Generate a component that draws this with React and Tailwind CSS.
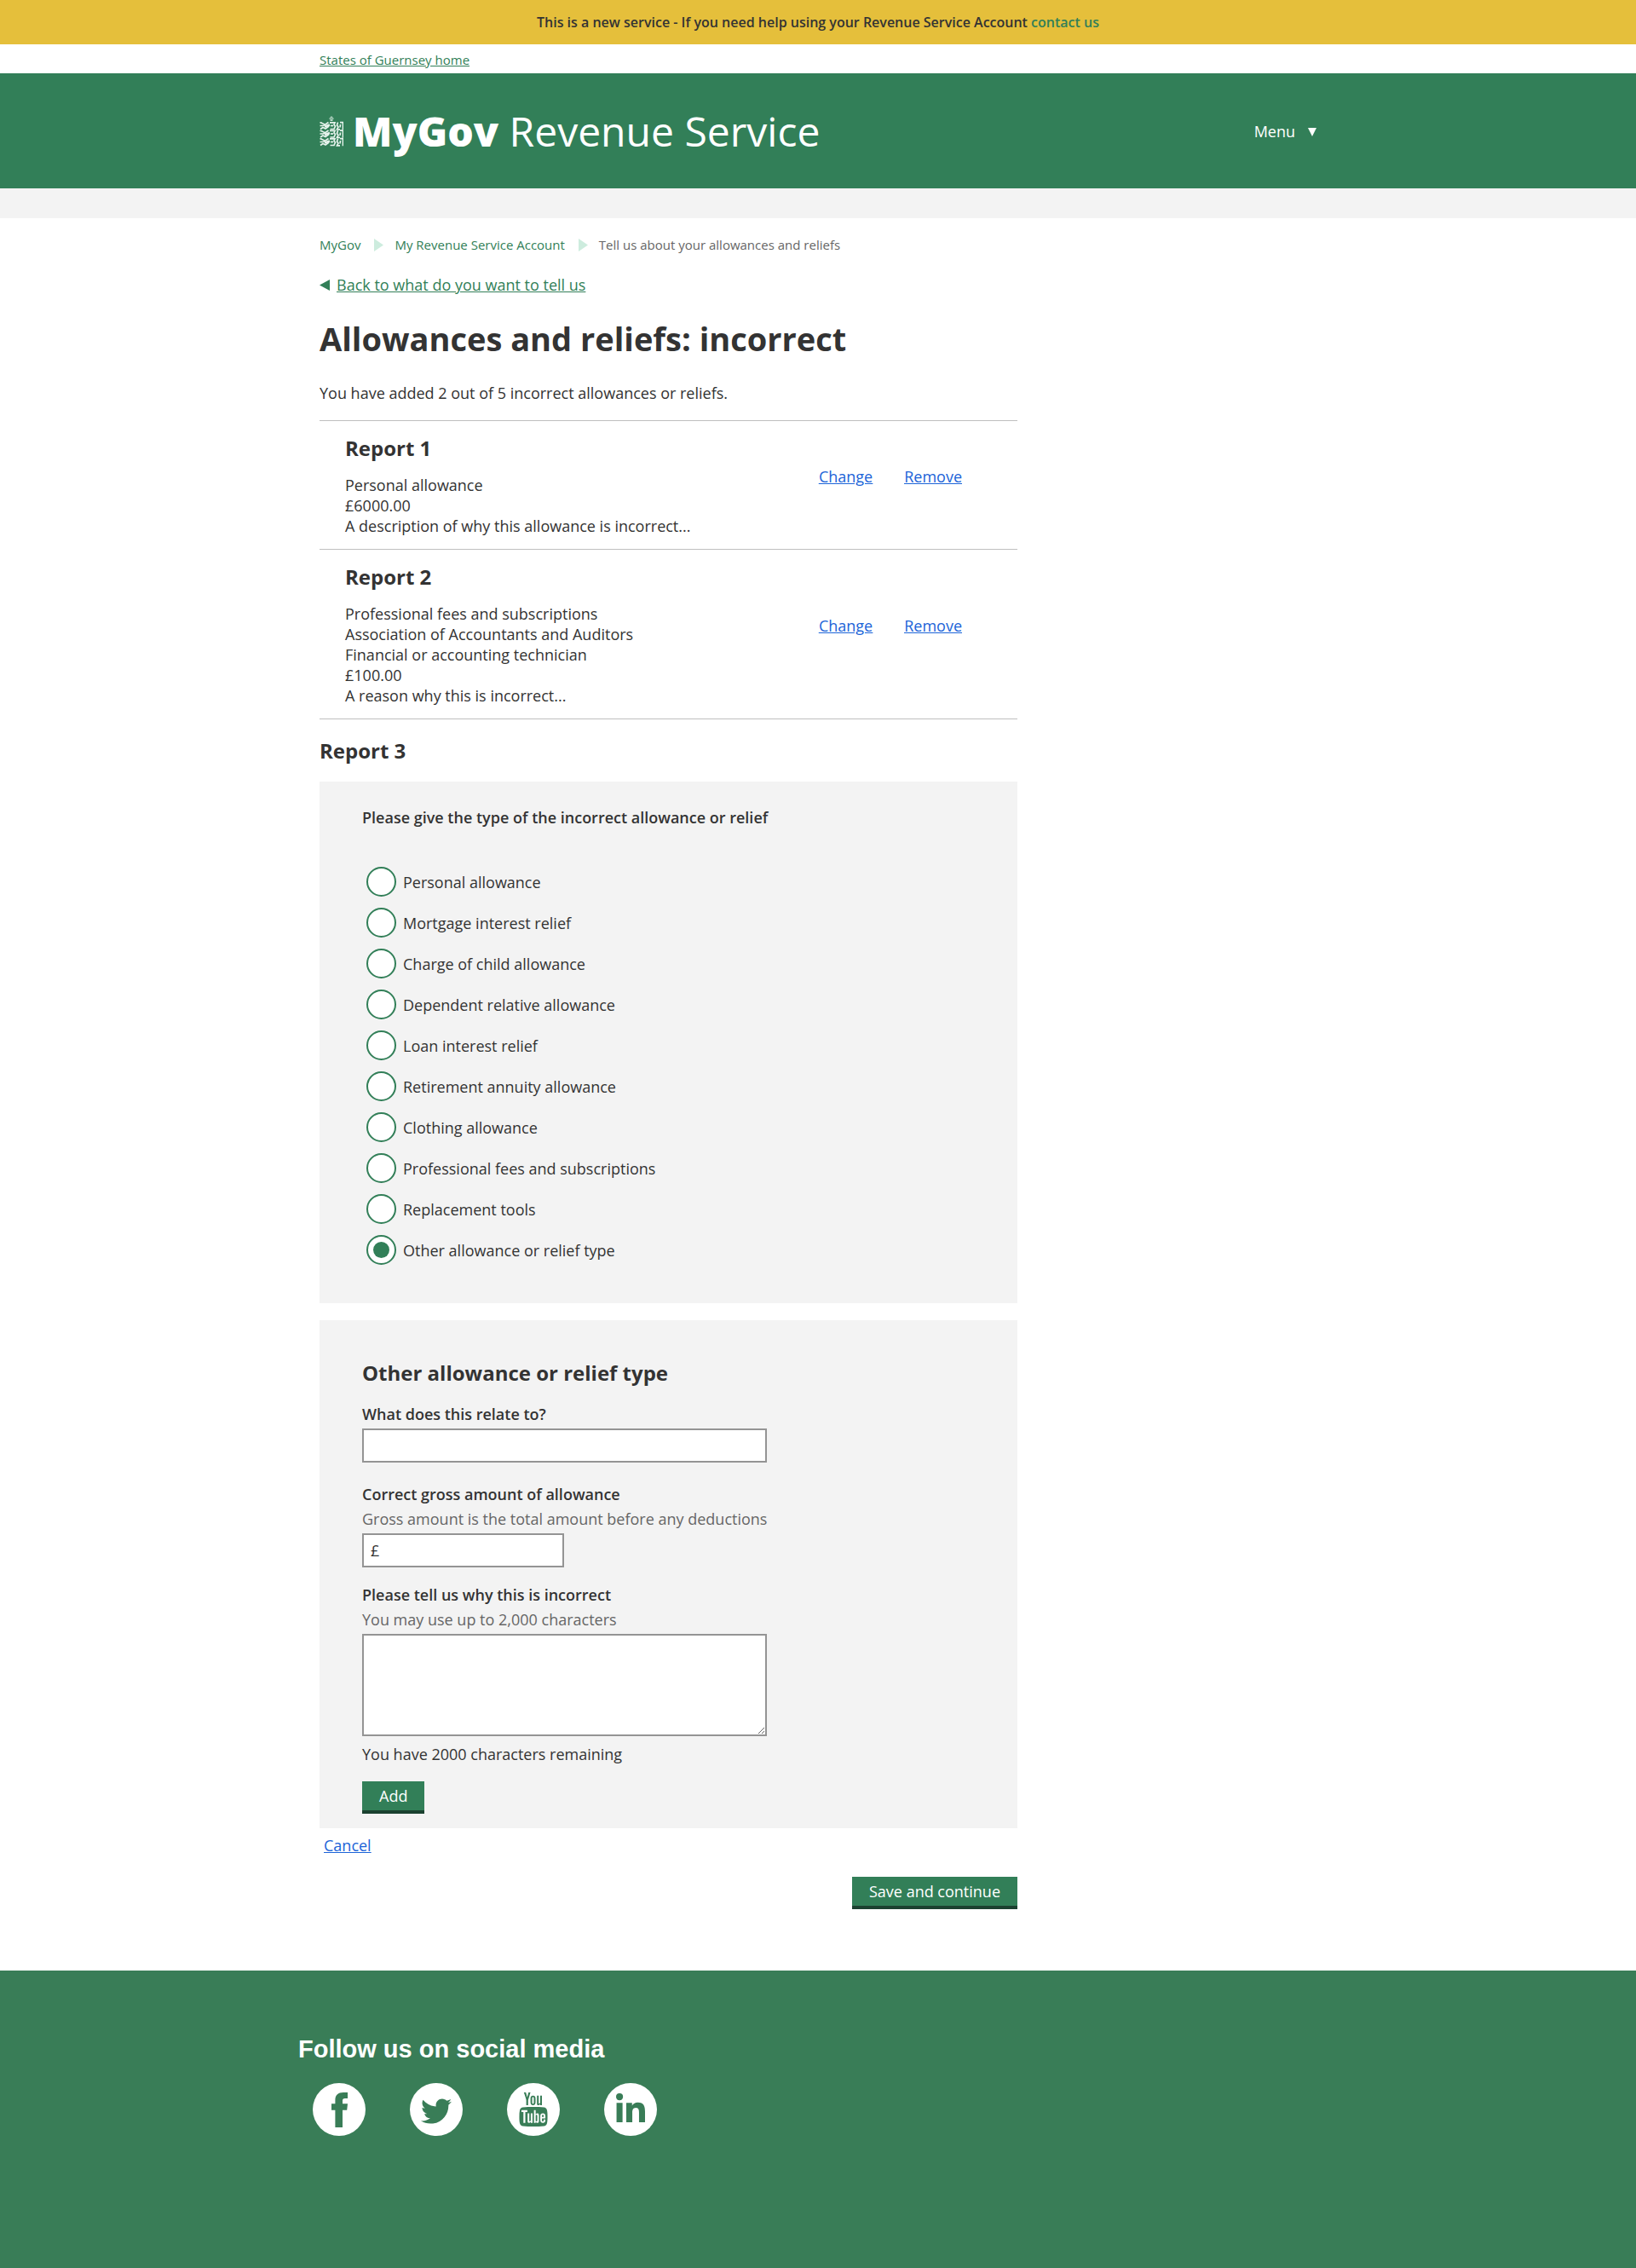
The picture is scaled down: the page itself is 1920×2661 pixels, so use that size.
import { useState } from "react";
import { FaTwitter, FaLinkedinIn } from "react-icons/fa";
import { TfiYoutube } from "react-icons/tfi";

const reports = [
  {
    title: "Report 1",
    lines: ["Personal allowance", "£6000.00", "A description of why this allowance is incorrect..."],
  },
  {
    title: "Report 2",
    lines: [
      "Professional fees and subscriptions",
      "Association of Accountants and Auditors",
      "Financial or accounting technician",
      "£100.00",
      "A reason why this is incorrect...",
    ],
  },
];

const types = [
  "Personal allowance",
  "Mortgage interest relief",
  "Charge of child allowance",
  "Dependent relative allowance",
  "Loan interest relief",
  "Retirement annuity allowance",
  "Clothing allowance",
  "Professional fees and subscriptions",
  "Replacement tools",
  "Other allowance or relief type",
];

const container = "mx-auto w-full max-w-[1170px]";
const field = "block border-2 border-[#949494] bg-white";
const button =
  "h-[38px] border-b-4 border-[#1b4130] bg-[#327f58] px-5 text-lg leading-6 font-medium text-white";

function Lion({ y }) {
  return (
    <g transform={`translate(0 ${y})`}>
      <path d="M0.500 1C3 .5 4 3 7 3L10.500 0.500" />
      <path d="M0.500 4.500H4L7 3.500" />
      <path d="M1 8.500L4 6.500L7 8L11 5" />
      <path d="M6 5.500L12 3.500" strokeWidth="2.600" />
      <path d="M12 0.800H18L17 3.500L18.500 5L17 8.500H12.500" />
      <path d="M13 4.500H16" />
      <path d="M21.500 0.500L20.500 4L22 6L20.500 8.800H24" />
      <path d="M24 0.600H27.500V9.200" />
      <path d="M24.500 3L24 6.500" />
    </g>
  );
}

function Crest() {
  return (
    <svg
      viewBox="0 0 28 36"
      className="h-9 w-7 shrink-0 fill-none stroke-[#e6f3ec] stroke-[1.7]"
      aria-hidden="true"
    >
      <path d="M14 0.500V6M12 2.500L14 1L16 2.500V4H12ZM12.500 5.500H15.500" strokeWidth="1" opacity=".7" />
      <Lion y={7} />
      <Lion y={16.500} />
      <Lion y={26} />
    </svg>
  );
}

function Chevron() {
  return (
    <svg viewBox="0 0 11 15" className="ml-4 mr-[13px] h-[15px] w-[11px] fill-[#cdecde]" aria-hidden="true">
      <path d="M0 0l11 7.5L0 15z" />
    </svg>
  );
}

function SocialLink({ label, children }) {
  return (
    <a
      href="#"
      aria-label={label}
      className="flex size-[62px] items-center justify-center rounded-full bg-white text-[#397d57]"
    >
      {children}
    </a>
  );
}

export default function App() {
  const [type, setType] = useState("Other allowance or relief type");
  const [reason, setReason] = useState("");

  return (
    <div className="bg-white font-['Open_Sans',sans-serif] text-lg leading-6 text-[#333]">
      <div className="bg-[#e5bf3b] py-3.5 text-center text-base leading-6 font-semibold">
        This is a new service - If you need help using your Revenue Service Account{" "}
        <a href="#" className="text-[#327f58]">contact us</a>
      </div>
      <div className={`${container} flex pt-1.5 pb-1`}>
        <a href="#" className="text-[15px] leading-6 text-[#327f58] underline">
          States of Guernsey home
        </a>
      </div>

      <header className="bg-[#327f58] text-white">
        <div className={`${container} flex items-center justify-between py-8`}>
          <a href="#" className="flex items-center gap-[11px]">
            <Crest />
            <span className="text-5xl leading-[71px]">
              <strong className="font-extrabold">MyGov</strong> Revenue Service
            </span>
          </a>
          <button type="button" className="flex items-center gap-[15px] font-medium">
            Menu
            <svg viewBox="0 0 10 12" className="h-3 w-2.5 fill-current" aria-hidden="true">
              <path d="M0 2h10L5 12z" />
            </svg>
          </button>
        </div>
      </header>
      <div className="h-[35px] bg-[#f3f3f3]" />

      <main className={container}>
        <nav aria-label="Breadcrumb" className="flex items-center pt-[19px] text-[15px] leading-6 text-[#327f58]">
          <a href="#">MyGov</a>
          <Chevron />
          <a href="#">My Revenue Service Account</a>
          <Chevron />
          <span className="text-[#666]">Tell us about your allowances and reliefs</span>
        </nav>
        <a href="#" className="mt-[23px] flex w-fit items-center gap-2 text-[#327f58]">
          <svg viewBox="0 0 12 13" className="h-[13px] w-3 fill-current" aria-hidden="true">
            <path d="M12 0v13L0 6.5z" />
          </svg>
          <span className="underline">Back to what do you want to tell us</span>
        </a>

        <div className="w-[70%]">
          <h1 className="mt-[27px] text-[38px] leading-[48px] font-bold whitespace-nowrap">
            Allowances and reliefs: incorrect
          </h1>
          <p className="mt-7">You have added 2 out of 5 incorrect allowances or reliefs.</p>

          <ul className="mt-5 border-t border-[#bfbfbf]">
            {reports.map((report) => (
              <li key={report.title} className="flex items-center border-b border-[#bfbfbf] pt-4 pb-[15px] pl-[30px]">
                <div className="flex-1">
                  <h2 className="text-2xl leading-8 font-bold">{report.title}</h2>
                  <div className="mt-[15px]">
                    {report.lines.map((line) => (
                      <p key={line}>{line}</p>
                    ))}
                  </div>
                </div>
                <div className="flex gap-[37px] pr-[65px] pb-[21px] text-[#1c64d8] underline">
                  <a href="#">Change</a>
                  <a href="#">Remove</a>
                </div>
              </li>
            ))}
          </ul>

          <h2 className="mt-[21px] text-2xl leading-8 font-bold">Report 3</h2>

          <form onSubmit={(e) => e.preventDefault()}>
            <fieldset className="mt-5 bg-[#f3f3f3] px-[50px] pt-[30px] pb-[45px]">
              <legend className="float-left w-full font-semibold">
                Please give the type of the incorrect allowance or relief
              </legend>
              <div className="clear-both flex flex-col gap-[13px] pt-[46px] pl-[5px]">
                {types.map((name) => (
                  <label key={name} className="flex w-fit items-center gap-2">
                    <input
                      type="radio"
                      name="type"
                      checked={type === name}
                      onChange={() => setType(name)}
                      className="grid size-[35px] appearance-none place-content-center rounded-full border-2 border-[#327f58] bg-white checked:before:size-[19px] checked:before:rounded-full checked:before:bg-[#327f58] checked:before:content-['']"
                    />
                    {name}
                  </label>
                ))}
              </div>
            </fieldset>

            <section className="mt-5 bg-[#f3f3f3] px-[50px] pt-[46px] pb-[17px]">
              <h2 className="text-2xl leading-8 font-bold">Other allowance or relief type</h2>
              <label htmlFor="relates" className="mt-5 block font-semibold">
                What does this relate to?
              </label>
              <input id="relates" type="text" className={`${field} mt-[5px] h-10 w-full max-w-[475px] px-2`} />

              <label htmlFor="amount" className="mt-[25px] block font-semibold">
                Correct gross amount of allowance
              </label>
              <p id="amount-hint" className="mt-[5px] text-[#666]">
                Gross amount is the total amount before any deductions
              </p>
              <div className={`${field} mt-[5px] flex h-10 w-[237px] items-center pl-2`}>
                <span>£</span>
                <input
                  id="amount"
                  type="text"
                  aria-describedby="amount-hint"
                  className="min-w-0 flex-1 bg-transparent px-1 outline-none"
                />
              </div>

              <label htmlFor="reason" className="mt-5 block font-semibold">
                Please tell us why this is incorrect
              </label>
              <p id="reason-hint" className="mt-[5px] text-[#666]">
                You may use up to 2,000 characters
              </p>
              <textarea
                id="reason"
                maxLength={2000}
                aria-describedby="reason-hint"
                value={reason}
                onChange={(e) => setReason(e.target.value)}
                className={`${field} mt-[5px] h-[120px] w-full max-w-[475px] resize p-2`}
              />
              <p className="mt-[9px]">You have {2000 - reason.length} characters remaining</p>
              <button type="button" className={`${button} mt-5 block`}>
                Add
              </button>
            </section>

            <a href="#" className="mt-2 ml-[5px] block w-fit text-[#1c64d8] underline">
              Cancel
            </a>
            <button type="submit" className={`${button} mt-[25px] mb-[72px] ml-auto block`}>
              Save and continue
            </button>
          </form>
        </div>
      </main>

      <footer className="bg-[#397d57] pt-[72px] pb-[155px]">
        <div className="mx-auto w-full max-w-[1220px] text-white">
          <h2 className="font-['Liberation_Sans',sans-serif] text-[29px] leading-10 font-bold">
            Follow us on social media
          </h2>
          <div className="mt-5 flex gap-[52px] pl-[17px]">
            <SocialLink label="Facebook">
              <svg viewBox="0 0 19 41" className="h-[41px] w-[19px] fill-current" aria-hidden="true">
                <path d="M13 41H4.400V20.700H0V13.300H4.400V9.300C4.400 2.700 8 0 14 0H19V7H16C13.600 7 13 8 13 9.700V13.300H19L18.200 20.700H13Z" />
              </svg>
            </SocialLink>
            <SocialLink label="Twitter">
              <FaTwitter className="mt-1 size-9" />
            </SocialLink>
            <SocialLink label="YouTube">
              <TfiYoutube className="size-10" />
            </SocialLink>
            <SocialLink label="LinkedIn">
              <FaLinkedinIn className="h-[39px] w-[34px]" />
            </SocialLink>
          </div>
        </div>
      </footer>
    </div>
  );
}
